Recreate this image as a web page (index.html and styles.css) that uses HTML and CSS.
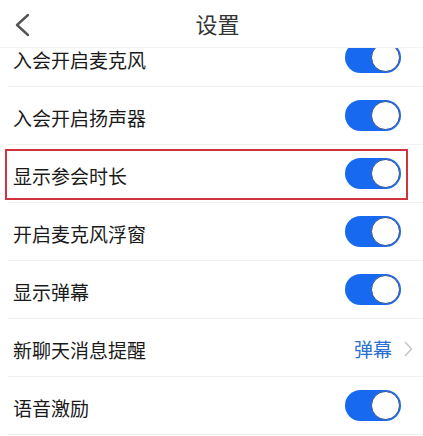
FILE: index.html
```html
<!DOCTYPE html>
<html lang="zh">
<head>
<meta charset="utf-8">
<title>设置</title>
<link rel="stylesheet" href="styles.css">
</head>
<body>
<div class="screen">
  <header class="nav">
    <svg class="back" width="16" height="24" viewBox="0 0 16 24"><polyline points="14,2 3,12 14,22" fill="none" stroke="#555" stroke-width="2.4" stroke-linecap="round" stroke-linejoin="round"/></svg>
    <div class="title">设置</div>
  </header>
  <div class="list">
    <div class="row"><span class="label">入会开启麦克风</span><span class="toggle"><span class="knob"></span></span></div>
    <div class="row"><span class="label">入会开启扬声器</span><span class="toggle"><span class="knob"></span></span></div>
    <div class="row marked"><span class="label">显示参会时长</span><span class="toggle"><span class="knob"></span></span><span class="mark"></span></div>
    <div class="row"><span class="label">开启麦克风浮窗</span><span class="toggle"><span class="knob"></span></span></div>
    <div class="row"><span class="label">显示弹幕</span><span class="toggle"><span class="knob"></span></span></div>
    <div class="row"><span class="label">新聊天消息提醒</span><span class="value">弹幕<svg class="more" width="9" height="16" viewBox="0 0 9 16"><polyline points="1.5,1.5 7.5,8 1.5,14.5" fill="none" stroke="#c6c6c6" stroke-width="1.6" stroke-linecap="round" stroke-linejoin="round"/></svg></span></div>
    <div class="row"><span class="label">语音激励</span><span class="toggle"><span class="knob"></span></span></div>
  </div>
</div>
</body>
</html>
```

FILE: styles.css
```css
html, body {
  margin: 0;
  padding: 0;
  background: #ffffff;
}
body {
  font-family: "Noto Sans CJK SC", "Noto Sans", sans-serif;
  color: #1a1a1a;
}
.screen {
  position: relative;
  width: 423px;
  height: 436px;
  overflow: hidden;
  background: #ffffff;
}
.nav {
  position: absolute;
  top: 0;
  left: 0;
  right: 0;
  height: 47px;
  background: #ffffff;
  border-bottom: 1px solid #f3f3f3;
  z-index: 2;
  display: flex;
  align-items: center;
  justify-content: center;
}
.back {
  position: absolute;
  left: 14px;
  top: 13px;
}
.title {
  font-size: 22px;
  color: #333333;
  line-height: 1;
  margin-top: -1px;
  margin-left: 12px;
}
.list {
  display: flex;
  flex-direction: column;
  padding-top: 29px;
}
.row {
  position: relative;
  height: 57px;
  display: flex;
  align-items: center;
  justify-content: space-between;
  padding: 0 22px 0 5px;
  border-bottom: 1px solid #f0f0f0;
  margin-left: 8px;
}
.label {
  font-size: 19px;
  line-height: 1;
  margin-top: 3px;
}
.toggle {
  width: 56px;
  height: 31px;
  border-radius: 16px;
  background: #1769f0;
  display: flex;
  align-items: center;
  justify-content: flex-end;
  padding-right: 1px;
  box-sizing: border-box;
}
.knob {
  width: 29px;
  height: 29px;
  border-radius: 50%;
  background: #ffffff;
  border: 1.5px solid #2d4f8e;
  box-sizing: border-box;
}
.value {
  display: flex;
  align-items: center;
  gap: 12px;
  font-size: 19px;
  color: #2a6fd2;
  line-height: 1;
  margin-right: -12px;
  margin-top: 2px;
}
.mark {
  position: absolute;
  left: -3px;
  right: 15px;
  top: 4px;
  bottom: 2px;
  border: 2px solid #d0323e;
  pointer-events: none;
}
```
